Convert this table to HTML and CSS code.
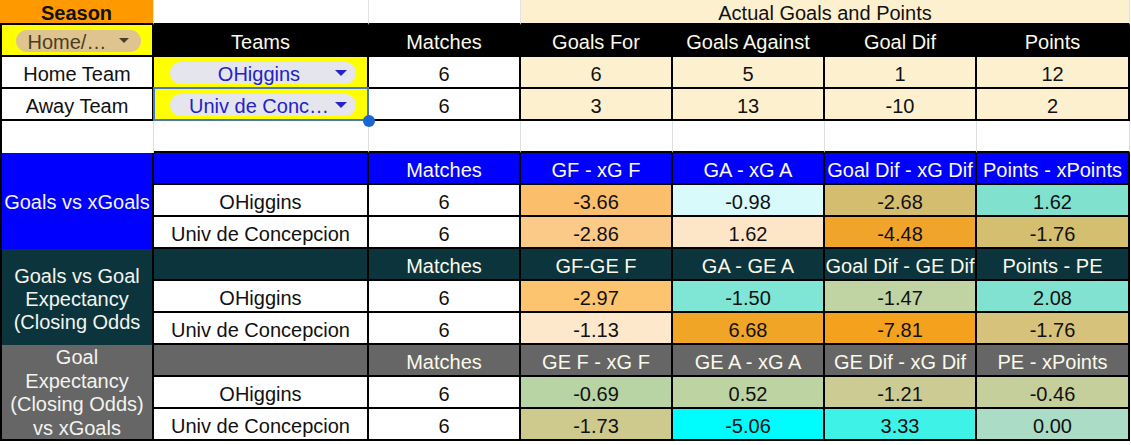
FILE: index.html
```html
<!DOCTYPE html>
<html>
<head>
<meta charset="utf-8">
<link rel="stylesheet" href="styles.css">
</head>
<body>
<div class="sheet">
  <!-- row 1 -->
  <div class="c season">Season</div>
  <div class="c top-blank"></div>
  <div class="c top-blank"></div>
  <div class="c actual span4">Actual Goals and Points</div>

  <!-- row 2 -->
  <div class="c first yellow">
    <div class="chip chip-tan"><span class="chip-text">Home/…</span><span class="arrow arrow-tan"></span></div>
  </div>
  <div class="c hdr-black">Teams</div>
  <div class="c hdr-black">Matches</div>
  <div class="c hdr-black">Goals For</div>
  <div class="c hdr-black">Goals Against</div>
  <div class="c hdr-black">Goal Dif</div>
  <div class="c hdr-black">Points</div>

  <!-- row 3 -->
  <div class="c first">Home Team</div>
  <div class="c yellow team-cell">
    <div class="chip chip-gray"><span class="chip-text">OHiggins</span><span class="arrow arrow-blue"></span></div>
  </div>
  <div class="c">6</div>
  <div class="c cream">6</div>
  <div class="c cream">5</div>
  <div class="c cream">1</div>
  <div class="c cream">12</div>

  <!-- row 4 -->
  <div class="c first">Away Team</div>
  <div class="c yellow team-cell selected">
    <div class="chip chip-gray"><span class="chip-text">Univ de Conc…</span><span class="arrow arrow-blue"></span></div>
    <div class="sel-box"></div>
    <div class="sel-handle"></div>
  </div>
  <div class="c">6</div>
  <div class="c cream">3</div>
  <div class="c cream">13</div>
  <div class="c cream">-10</div>
  <div class="c cream">2</div>

  <!-- row 5 -->
  <div class="c first gap-a"></div>
  <div class="c gap"></div>
  <div class="c gap"></div>
  <div class="c gap"></div>
  <div class="c gap"></div>
  <div class="c gap"></div>
  <div class="c gap"></div>

  <!-- section 1 -->
  <div class="c first sec sec-blue">Goals vs xGoals</div>
  <div class="c hdr-blue"></div>
  <div class="c hdr-blue">Matches</div>
  <div class="c hdr-blue">GF - xG F</div>
  <div class="c hdr-blue">GA - xG A</div>
  <div class="c hdr-blue">Goal Dif - xG Dif</div>
  <div class="c hdr-blue">Points - xPoints</div>

  <div class="c">OHiggins</div>
  <div class="c">6</div>
  <div class="c" style="background:#fbbf6c">-3.66</div>
  <div class="c" style="background:#d9fafb">-0.98</div>
  <div class="c" style="background:#d5bd6f">-2.68</div>
  <div class="c" style="background:#80e1cf">1.62</div>

  <div class="c">Univ de Concepcion</div>
  <div class="c">6</div>
  <div class="c" style="background:#fcca88">-2.86</div>
  <div class="c" style="background:#fde6c8">1.62</div>
  <div class="c" style="background:#f1a42a">-4.48</div>
  <div class="c" style="background:#d4be70">-1.76</div>

  <!-- section 2 -->
  <div class="c first sec sec-teal">Goals vs Goal<br>Expectancy<br>(Closing Odds</div>
  <div class="c hdr-teal"></div>
  <div class="c hdr-teal">Matches</div>
  <div class="c hdr-teal">GF-GE F</div>
  <div class="c hdr-teal">GA - GE A</div>
  <div class="c hdr-teal">Goal Dif - GE Dif</div>
  <div class="c hdr-teal">Points - PE</div>

  <div class="c">OHiggins</div>
  <div class="c">6</div>
  <div class="c" style="background:#fcc46f">-2.97</div>
  <div class="c" style="background:#7fe5d4">-1.50</div>
  <div class="c" style="background:#c0d3a3">-1.47</div>
  <div class="c" style="background:#82e2d2">2.08</div>

  <div class="c">Univ de Concepcion</div>
  <div class="c">6</div>
  <div class="c" style="background:#fde8cc">-1.13</div>
  <div class="c" style="background:#f1a527">6.68</div>
  <div class="c" style="background:#f4a21e">-7.81</div>
  <div class="c" style="background:#d6c27a">-1.76</div>

  <!-- section 3 -->
  <div class="c first sec sec-gray last-sec">Goal<br>Expectancy<br>(Closing Odds)<br>vs xGoals</div>
  <div class="c hdr-gray"></div>
  <div class="c hdr-gray">Matches</div>
  <div class="c hdr-gray">GE F - xG F</div>
  <div class="c hdr-gray">GE A - xG A</div>
  <div class="c hdr-gray">GE Dif - xG Dif</div>
  <div class="c hdr-gray">PE - xPoints</div>

  <div class="c">OHiggins</div>
  <div class="c">6</div>
  <div class="c" style="background:#b8d4a4">-0.69</div>
  <div class="c" style="background:#bdd3a2">0.52</div>
  <div class="c" style="background:#cccb93">-1.21</div>
  <div class="c" style="background:#c4cf9b">-0.46</div>

  <div class="c">Univ de Concepcion</div>
  <div class="c">6</div>
  <div class="c" style="background:#cec98d">-1.73</div>
  <div class="c" style="background:#00fdfd">-5.06</div>
  <div class="c" style="background:#3ff2e8">3.33</div>
  <div class="c" style="background:#abdcc5">0.00</div>
</div>
</body>
</html>
```

FILE: styles.css
```css
html, body {
  margin: 0;
  padding: 0;
  background: #ffffff;
}

.sheet {
  display: grid;
  grid-template-columns: 154px 215px 152px 152px 152px 152px 153px;
  grid-template-rows: 25px repeat(13, 32px);
  width: 1130px;
  font-family: "Liberation Sans", Arial, sans-serif;
  font-size: 20px;
  color: #111111;
}

.c {
  box-sizing: border-box;
  display: flex;
  align-items: center;
  justify-content: center;
  text-align: center;
  white-space: nowrap;
  overflow: hidden;
  border-right: 2px solid #000000;
  border-bottom: 2px solid #000000;
  background: #ffffff;
  line-height: 1;
  padding-top: 3px;
}

.first {
  border-left: 2px solid #000000;
}

/* row 1 */
.season {
  background: #ff9900;
  font-weight: bold;
  color: #111111;
  border-right: 1px solid #e2e2e2;
  padding-top: 2px;
}

.top-blank {
  border-right: 1px solid #e2e2e2;
}

.span4 {
  grid-column: span 4;
}

.actual {
  background: #fdf0cf;
  border-right: 1px solid #e2e2e2;
  padding-top: 2px;
}

/* fills */
.yellow {
  background: #ffff00;
}

.cream {
  background: #fdf0cf;
}

.hdr-black,
.hdr-blue,
.hdr-teal,
.hdr-gray {
  color: #fbf9ea;
}

.hdr-black {
  background: #000000;
}

.hdr-blue {
  background: #0000ff;
}

.hdr-teal {
  background: #0c343d;
}

.hdr-gray {
  background: #666666;
}

/* spacer row */
.gap {
  border-right: 1px solid #dedede;
}

.gap-a {
  border-right: 1px solid #dedede;
  border-bottom: none;
}

/* section label cells */
.sec {
  grid-row: span 3;
  white-space: normal;
  line-height: 23px;
  color: #f3f3ee;
  border-bottom: none;
  padding-top: 5px;
}

.sec-blue {
  background: #0000ff;
  padding-top: 3px;
}

.sec-teal {
  background: #0c343d;
}

.sec-gray {
  background: #666666;
}

.last-sec {
  border-bottom: 2px solid #000000;
  line-height: 23.5px;
  padding-top: 2px;
}

/* dropdown chips */
.chip {
  box-sizing: border-box;
  display: flex;
  align-items: center;
  border-radius: 12px;
  height: 22px;
  margin-top: -2px;
}

.chip-text {
  flex: 1;
  text-align: center;
  white-space: nowrap;
  padding-top: 2px;
}

.chip-tan {
  width: 125px;
  background: #dfc48f;
  color: #4b3d25;
  padding: 0 12px 0 12px;
  margin-left: 2px;
}

.chip-tan .chip-text {
  text-align: left;
}

.chip-gray {
  width: 186px;
  background: #e5e5ee;
  color: #2323c6;
  padding: 0 9px 0 13px;
  margin-left: 5px;
}

.arrow {
  width: 0;
  height: 0;
  border-left: 5px solid transparent;
  border-right: 5px solid transparent;
  border-top: 5px solid #4b3d25;
}

.arrow-tan {
  border-top-color: #4b3d25;
}

.arrow-blue {
  border-left-width: 6px;
  border-right-width: 6px;
  border-top: 6px solid #2323c6;
}

.selected {
  position: relative;
  overflow: visible;
}

.sel-box {
  position: absolute;
  left: -1px;
  top: -2px;
  right: -2px;
  bottom: -2px;
  border: 2px solid #4a76c0;
  pointer-events: none;
}

.sel-handle {
  position: absolute;
  right: -8px;
  bottom: -8px;
  width: 12px;
  height: 12px;
  border-radius: 50%;
  background: #1a66d2;
  z-index: 2;
}
```
